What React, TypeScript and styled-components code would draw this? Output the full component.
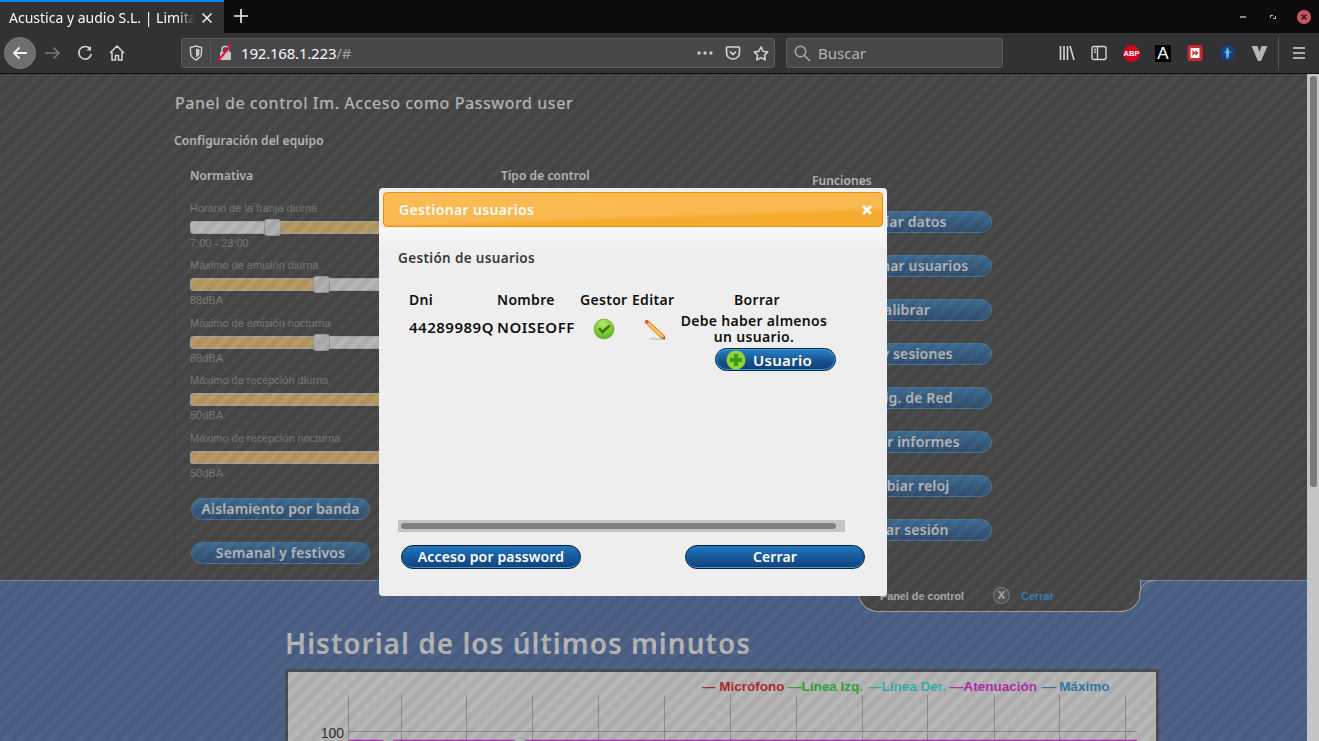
import React from "react";
import styled, { createGlobalStyle } from "styled-components";

const Global = createGlobalStyle`
  html, body { margin: 0; padding: 0; height: 100%; overflow: hidden; background: #323234; }
  * { box-sizing: border-box; }
  #root { height: 741px; }
`;
const ui = `"Noto Sans", "Open Sans", sans-serif`;
const arial = `"Liberation Sans", Arial, sans-serif`;

const Window = styled.div`width:1319px;height:741px;display:flex;flex-direction:column;overflow:hidden;font-family:${ui};`;
const TabStrip = styled.div`height:33px;background:#0c0c0d;display:flex;align-items:stretch;color:#f9f9fa;flex:none;`;
const Tab = styled.div`width:224px;background:#323234;border-top:2px solid #0a84ff;display:flex;align-items:center;padding:0 10px 0 9px;font-size:14px;`;
const TabTitle = styled.span`width:186px;white-space:nowrap;-webkit-mask-image:linear-gradient(90deg,#000 168px,transparent 186px);mask-image:linear-gradient(90deg,#000 168px,transparent 186px);`;
const TabClose = styled.svg`width:12px;height:12px;margin-left:6px;flex:none;`;
const NewTab = styled.svg`width:16px;height:16px;margin:8px 0 0 9px;`;
const WinControls = styled.div`margin-left:auto;display:flex;align-items:center;gap:18px;padding:0 8px 0 0;`;
const WinBtn = styled.svg`width:12px;height:12px;`;
const WinClose = styled.svg`width:14px;height:16px;`;
const NavBar = styled.div`height:41px;background:#323234;border-bottom:1px solid #0c0c0d;display:flex;align-items:center;flex:none;padding-left:4px;`;
const BackCircle = styled.div`width:32px;height:32px;border-radius:50%;background:#6e6e70;display:flex;align-items:center;justify-content:center;border:1px solid #7c7c7e;`;
const NavIcon = styled.div<{ $w: number }>`width:${p => p.$w}px;height:30px;display:flex;align-items:center;justify-content:center;flex:none;`;
const UrlBar = styled.div`width:594px;height:30px;margin-left:48px;background:#474749;border:1px solid #5b5b5e;border-radius:3px;display:flex;align-items:center;color:#f9f9fa;font-size:15px;`;
const UrlDivider = styled.span`width:1px;height:22px;background:#5b5b5e;margin:0 6px 0 0;`;
const UrlHost = styled.span`margin-left:8px;letter-spacing:-.2px;`;
const UrlPath = styled.span`color:#a2a2a4;flex:1;`;
const SearchBar = styled.div`width:217px;height:30px;margin-left:11px;background:#474749;border:1px solid #5b5b5e;border-radius:3px;display:flex;align-items:center;padding-left:7px;gap:7px;color:#b4b4b6;font-size:15px;`;
const Tools = styled.div`display:flex;align-items:center;margin-left:48px;`;
const ToolSep = styled.span`width:1px;height:32px;background:#58585a;margin:0 4px 0 3px;`;
const LetterBadge = styled.span`width:16px;height:17px;background:#000;color:#fff;font:17px/17px ${arial};text-align:center;`;

const Body = styled.div`flex:1;display:flex;min-height:0;`;
const Page = styled.div`width:1307px;position:relative;overflow:hidden;display:flex;flex-direction:column;`;
const ScrollTrack = styled.div`width:12px;background:#c4c4c4;padding:2px 2px 0 3px;`;
const ScrollThumb = styled.div`height:411px;background:#7a7a7a;border-radius:3px;`;
const Overlay = styled.div`position:absolute;inset:0;background-color:rgba(0,0,0,.285);background-image:repeating-linear-gradient(135deg,rgba(0,0,0,.05) 0 4.9px,rgba(255,255,255,.012) 5.7px 9.8px,rgba(0,0,0,.05) 10.6px);pointer-events:none;`;

const Top = styled.section`height:506px;background:#666;padding:19px 0 0 174px;flex:none;`;
const Heading = styled.h1`margin:0;font:500 16px/20px ${ui};color:#fff;letter-spacing:.55px;padding-left:1px;white-space:nowrap;`;
const SubHeading = styled.h2`margin:20px 0 0;font:600 12px/16px ${ui};color:#fff;letter-spacing:.12px;`;
const Columns = styled.div`display:flex;margin-top:11px;`;
const Col = styled.div<{ $w: number }>`width:${p => p.$w}px;height:410px;border-left:1px solid #5d5d5d;padding:8px 0 0 15px;flex:none;`;
const ColTitle = styled.h3<{ $mt?: number }>`margin:${p => p.$mt ?? 0}px 0 0;font:600 12px/16px ${ui};color:#fff;letter-spacing:.07px;`;
const SliderBlock = styled.div`width:280px;height:57.5px;font:11px/13px ${arial};color:#a8a8a8;`;
const SliderList = styled.div`margin-top:17.75px;`;
const Track = styled.div`height:13px;margin:6px 0 3px;background:#fff;border:1px solid #e6e6e6;border-radius:3px;position:relative;`;
const Fill = styled.div`position:absolute;top:0;bottom:0;background:#ffd78b;border-radius:2px;`;
const Handle = styled.div`position:absolute;top:-3px;width:17px;height:17px;background:#f6f6f6;border:1px solid #d0d0d0;border-radius:3px;`;
const Pill = styled.div`width:179px;height:22px;margin:0 0 22px 1px;border-radius:11px;border:1px solid #6ba2cc;background:linear-gradient(#5a98cc,#4d80b2 55%,#4a709f);color:#fff;font:600 14px/20px ${ui};letter-spacing:.15px;text-align:center;white-space:nowrap;overflow:hidden;`;
const PillGroup = styled.div`margin-top:8.25px;`;
const FnList = styled.div`margin-top:22px;`;

const Bottom = styled.section`flex:1;background:#6c89bf;border-top:1px solid #bbb;position:relative;padding-left:285px;`;
const PanelTab = styled.div`position:absolute;left:858px;top:-1px;width:283px;height:32px;background:#666;border:1px solid #e0e0e0;border-top:0;border-radius:0 0 20px 20px;display:flex;align-items:center;padding:0 0 0 21px;font:700 10.8px ${arial};color:#eee;
  &::after{content:"";position:absolute;right:-15px;top:0;width:15px;height:15px;border-top-left-radius:15px;border-top:1px solid #e0e0e0;border-left:1px solid #e0e0e0;background:#6c89bf;}
`;
const TabSep = styled.span`width:1px;height:14px;background:#777;margin:0 15px 0 13px;`;
const XCircle = styled.span`width:17px;height:17px;border-radius:50%;background:#777;border:1px solid #bbb;color:#eee;font-size:11px;line-height:15px;text-align:center;`;
const CloseLink = styled.span`color:#48b2ea;margin-left:11px;font-size:11px;`;
const BigTitle = styled.h2`margin:0;padding:42px 0 0;font:600 28px/40px ${ui};color:#fff;letter-spacing:1px;white-space:nowrap;`;
const ChartBox = styled.div`width:874px;height:80px;margin-top:6px;background:#fff;border:3px solid #6d6d6d;border-bottom:0;`;
const ChartSvg = styled.svg`display:block;`;

const Dialog = styled.div`position:absolute;left:379px;top:114px;width:508px;height:408px;background:#eee;border-radius:4px;padding:4px;display:flex;flex-direction:column;`;
const DialogBar = styled.div`height:35px;border:1px solid #e78f08;border-radius:4px;background:linear-gradient(178deg,#fbbb54 0%,#f9b84f 62%,#f6a92c 72%,#f6ab2f 100%);display:flex;align-items:center;justify-content:space-between;padding:0 10px 0 15px;color:#fff;font:600 14px/20px ${ui};letter-spacing:.35px;flex:none;`;
const DialogBody = styled.div`flex:1;background:linear-gradient(#f8f8f8,#eee 26px);margin:0 -4px;padding:21px 19px 0;display:flex;flex-direction:column;position:relative;`;
const DialogSub = styled.h3`margin:0;font:600 13.5px/20px ${ui};color:#3a3a3a;letter-spacing:.35px;`;
const Table = styled.table`border-collapse:collapse;table-layout:fixed;width:431px;margin:22px 0 0 11px;color:#111;font:600 14px/16px ${ui};letter-spacing:.3px;`;
const Th = styled.th<{ $w: number }>`width:${p => p.$w}px;padding:0;font-weight:600;text-align:left;height:20px;white-space:nowrap;`;
const ThCenter = styled(Th)`text-align:center;padding-right:10px;`;
const Td = styled.td`padding:9px 0 0;vertical-align:top;white-space:nowrap;font-size:15px;letter-spacing:.5px;`;
const TdIcon = styled.td<{ $ml: number }>`padding:8px 0 0 ${p => p.$ml}px;vertical-align:top;`;
const TdWide = styled.td`padding:3px 0 0;vertical-align:top;text-align:center;`;
const Warn = styled.div`line-height:16px;width:150px;margin-left:-5px;`;
const AddBtn = styled.div`width:121px;height:23px;margin:3px 0 0 31px;border-radius:12px;background:linear-gradient(#2b84c9,#164f8d 60%,#123f76);border:1px solid #0f2c55;box-shadow:inset 0 0 0 1px #3c9ad8;display:flex;align-items:center;padding-left:10px;color:#fff;font:600 15px/20px ${ui};letter-spacing:.3px;gap:7px;`;
const HScroll = styled.div`position:absolute;left:19px;top:293px;width:447px;height:12px;background:#c4c4c4;padding:3px 9px 3px 3px;`;
const HThumb = styled.div`height:6px;background:#7f7f7f;border-radius:3px;`;
const DialogFoot = styled.div`position:absolute;left:22px;right:22px;top:318px;display:flex;justify-content:space-between;`;
const DialogBtn = styled.div`width:180px;height:24px;border-radius:12px;background:linear-gradient(#2277bd,#175a9d 50%,#123f76);border:1px solid #0b1e3c;box-shadow:inset 0 -1px 0 #3c9ad8;color:#fff;font:600 14px/22px ${ui};letter-spacing:.15px;text-align:center;`;

const stroke = "#d6d6d8";
const I = {
  Back: () => <svg width="18" height="18" viewBox="0 0 18 18" fill="none" stroke="#f0f0f0" strokeWidth="1.8"><path d="M16 9H3M8.500 3.500 3 9l5.500 5.500" /></svg>,
  Fwd: () => <svg width="18" height="18" viewBox="0 0 18 18" fill="none" stroke="#7b7b7d" strokeWidth="1.6"><path d="M1 9h14M9.500 3.500 15 9l-5.500 5.500" /></svg>,
  Reload: () => <svg width="16" height="16" viewBox="0 0 16 16" fill="none" stroke={stroke} strokeWidth="1.6"><path d="M13.500 4.500A6.300 6.300 0 1 0 14.300 9" /><path d="M14 1v4.500H9.500" fill={stroke} stroke="none" /></svg>,
  Home: () => <svg width="18" height="18" viewBox="0 0 18 18" fill="none" stroke={stroke} strokeWidth="1.5"><path d="M2 9 9 2l7 7M4 8v8h3.500v-4.500h3V16H14V8" /></svg>,
  Shield: () => <svg width="14" height="16" viewBox="0 0 14 16" fill="none" stroke="#c8c8ca" strokeWidth="1.5"><path d="M1.500 2.500 7 1l5.500 1.500V8c0 3-2.500 5.500-5.500 7-3-1.500-5.500-4-5.500-7z" /><path d="M7 3.500 10.500 4.500V8c0 2-1.500 3.500-3.500 4.500z" fill="#c8c8ca" stroke="none" /></svg>,
  Lock: () => <svg width="16" height="18" viewBox="0 0 16 18"><path d="M5 8V5.500a3.200 3.200 0 0 1 6.400 0V8" fill="none" stroke="#c8c8ca" strokeWidth="1.5" /><rect x="3" y="8" width="11" height="8" rx="1" fill="#c8c8ca" /><path d="M1 17 14 1" stroke="#ff0039" strokeWidth="2" /></svg>,
  Dots: () => <svg width="16" height="4" viewBox="0 0 16 4" fill="#c8c8ca"><circle cx="2" cy="2" r="1.700" /><circle cx="8" cy="2" r="1.700" /><circle cx="14" cy="2" r="1.700" /></svg>,
  Pocket: () => <svg width="16" height="16" viewBox="0 0 16 16" fill="none" stroke="#d6d6d8" strokeWidth="1.6"><path d="M2.300 2h11.400c.5 0 .8.300.8.800V8c0 3.400-3 6-6.500 6S1.500 11.400 1.500 8V2.800c0-.5.300-.8.800-.8z" /><path d="m5 6.500 3 3 3-3" /></svg>,
  Star: () => <svg width="17" height="17" viewBox="0 0 17 17" fill="none" stroke="#d6d6d8" strokeWidth="1.6" strokeLinejoin="round"><path d="m8.500 1.500 2.200 4.600 5 .7-3.600 3.500.9 5-4.500-2.400-4.500 2.400.9-5L1.300 6.800l5-.7z" /></svg>,
  Search: () => <svg width="17" height="17" viewBox="0 0 17 17" fill="none" stroke="#a8a8aa" strokeWidth="1.5"><circle cx="6.500" cy="6.500" r="5.200" /><path d="m10.500 10.500 5.500 5.500" /></svg>,
  Library: () => <svg width="16" height="16" viewBox="0 0 16 16" fill="none" stroke="#d6d6d8" strokeWidth="1.6"><path d="M1.500 1v14M5 1v14M8.500 1v14M11 1l4 14" /></svg>,
  Sidebar: () => <svg width="16" height="16" viewBox="0 0 16 16" fill="none" stroke="#d6d6d8" strokeWidth="1.4"><rect x="1" y="1.500" width="14" height="13" rx="2" /><path d="M6.500 1.500v13" /><path d="M3 4.500h2M3 7h2" /></svg>,
  Abp: () => <svg width="17" height="17" viewBox="0 0 17 17"><circle cx="8.500" cy="8.500" r="8.500" fill="#d0021b" /><text x="8.500" y="11.300" textAnchor="middle" fontFamily={arial} fontWeight="700" fontSize="7.500" fill="#fff">ABP</text></svg>,
  Red: () => <svg width="16" height="16" viewBox="0 0 15 16"><rect width="15" height="16" rx="2" fill="#c92a2a" /><rect x="3" y="3" width="9" height="10" rx="1" fill="#fff" /><path d="M5 5l3 3-3 3zM8 5l3 3-3 3z" fill="#c92a2a" /></svg>,
  Blue: () => <svg width="15" height="16" viewBox="0 0 16 18"><ellipse cx="8" cy="9" rx="8" ry="9" fill="#17407e" /><path d="M8 2 10 7l3 2-3-.5L9 15H7L6 8.500 3 9l3-2z" fill="#6bb4dc" /></svg>,
  V: () => <svg width="17" height="15" viewBox="0 0 16 15"><path d="M0 0h6l2 6 2-6h6L9.500 15h-3z" fill="#b4b4b6" /></svg>,
  Menu: () => <svg width="14" height="14" viewBox="0 0 14 14" stroke="#d6d6d8" strokeWidth="1.6"><path d="M1 2h12M1 7h12M1 12h12" /></svg>,
  Check: () => <svg width="22" height="22" viewBox="0 0 22 22"><defs><radialGradient id="gc" cx=".45" cy=".25" r=".85"><stop offset="0" stopColor="#b4e86a" /><stop offset=".6" stopColor="#7cc92e" /><stop offset="1" stopColor="#4da61a" /></radialGradient></defs><circle cx="11" cy="11" r="10" fill="url(#gc)" stroke="#5c9c2a" strokeWidth=".6" /><path d="m5 11 2-1.500 2.500 2.500L16 6.500l1.500 2L9.500 16z" fill="#3b7a14" /></svg>,
  Pencil: () => <svg width="22" height="22" viewBox="0 0 22 22"><path d="M6 20.500 20 21.500" stroke="#c4c4c4" strokeWidth="1.500" /><path d="M5 3.500 20 17l1 4-4-1L2.500 6z" fill="#f6b33c" stroke="#b97a18" strokeWidth=".7" /><path d="M4.500 5.500l13 12.500" stroke="#fbdc8a" strokeWidth="1" /><path d="M2.500 6 5 3.500 3.600 2.200a1.300 1.300 0 0 0-1.900 0l-.6.6a1.300 1.300 0 0 0 0 1.900z" fill="#e2445c" /><path d="M18.500 20.400 21 21l-.6-2.500z" fill="#444" /></svg>,
  Plus: () => <svg width="20" height="20" viewBox="0 0 20 20"><circle cx="10" cy="10" r="9.500" fill="#8fd336" /><path d="M8 4h4v4h4v4h-4v4H8v-4H4V8h4z" fill="#3f9a1c" /></svg>,
};

const sliders = [
  { label: "Horario de la franja diurna", value: "7:00 - 23:00", from: 90, to: 280, handle: 73 },
  { label: "Máximo de emisión diurna", value: "88dBA", from: 0, to: 124, handle: 122 },
  { label: "Máximo de emisión nocturna", value: "88dBA", from: 0, to: 124, handle: 122 },
  { label: "Máximo de recepción diurna", value: "50dBA", from: 0, to: 280 },
  { label: "Máximo de recepción nocturna", value: "50dBA", from: 0, to: 280 },
];
const functions = ["Copiar datos", "Gestionar usuarios", "Calibrar", "Log y sesiones", "Config. de Red", "Grabar informes", "Cambiar reloj", "Cerrar sesión"];
const verticals = [348, 401, 466, 532, 598, 664, 730, 796, 862, 927, 994, 1059, 1125];
const legend = [
  { t: "— Micrófono", c: "#f63a43", x: 417 },
  { t: "—Línea Izq.", c: "#42e851", x: 503 },
  { t: "—Línea Der.", c: "#4af6f0", x: 583 },
  { t: "—Atenuación", c: "#f63df3", x: 665 },
  { t: "— Máximo", c: "#42a8eb", x: 757 },
];

const Chart = () => (
  <ChartSvg width="868" height="80" viewBox="0 0 868 80">
    {verticals.map(x => <line key={x} x1={x - 287.5} x2={x - 287.5} y1="23" y2="70" stroke="#c4c4c4" />)}
    <line x1="60" x2="849" y1="59.500" y2="59.500" stroke="#c4c4c4" />
    <path d="M60 68.500H95M105 68.500H227M237 68.500H849" stroke="#ec4ce4" strokeWidth="1.500" />
    <text x="56" y="66" textAnchor="end" fontFamily={arial} fontSize="14" fill="#444">100</text>
    {legend.map(l => <text key={l.t} x={l.x - 3} y="19" fontFamily={arial} fontWeight="700" fontSize="13.500" fill={l.c}>{l.t}</text>)}
  </ChartSvg>
);

export default function App() {
  return (
    <Window>
      <Global />
      <TabStrip>
        <Tab>
          <TabTitle>Acustica y audio S.L. | Limita</TabTitle>
          <TabClose viewBox="0 0 12 12" stroke="#f0f0f0" strokeWidth="1.500"><path d="M1.500 1.500l9 9M10.500 1.500l-9 9" /></TabClose>
        </Tab>
        <NewTab viewBox="0 0 16 16" stroke="#f0f0f0" strokeWidth="1.600"><path d="M8 1v14M1 8h14" /></NewTab>
        <WinControls>
          <WinBtn viewBox="0 0 12 12"><path d="M3 6h6" stroke="#b4b4b4" strokeWidth="1.500" /></WinBtn>
          <WinBtn viewBox="0 0 12 12"><path d="M3 4h3v1H4v2H3zM9 8H6V7h2V5h1z" fill="#b4b4b4" /></WinBtn>
          <WinClose viewBox="0 0 12 12"><ellipse cx="6" cy="6" rx="6" ry="6" fill="#c9535f" /><path d="M4 4l4 4M8 4l-4 4" stroke="#222" strokeWidth="1.400" /></WinClose>
        </WinControls>
      </TabStrip>
      <NavBar>
        <BackCircle><I.Back /></BackCircle>
        <NavIcon $w={33}><I.Fwd /></NavIcon>
        <NavIcon $w={32}><I.Reload /></NavIcon>
        <NavIcon $w={32}><I.Home /></NavIcon>
        <UrlBar>
          <NavIcon $w={28}><I.Shield /></NavIcon>
          <UrlDivider />
          <I.Lock />
          <UrlHost>192.168.1.223</UrlHost><UrlPath>/#</UrlPath>
          <NavIcon $w={16}><I.Dots /></NavIcon>
          <NavIcon $w={40}><I.Pocket /></NavIcon>
          <NavIcon $w={16}><I.Star /></NavIcon>
          <NavIcon $w={5} />
        </UrlBar>
        <SearchBar><I.Search />Buscar</SearchBar>
        <Tools>
          <NavIcon $w={32}><I.Library /></NavIcon>
          <NavIcon $w={32}><I.Sidebar /></NavIcon>
          <NavIcon $w={32}><I.Abp /></NavIcon>
          <NavIcon $w={32}><LetterBadge>A</LetterBadge></NavIcon>
          <NavIcon $w={32}><I.Red /></NavIcon>
          <NavIcon $w={32}><I.Blue /></NavIcon>
          <NavIcon $w={32}><I.V /></NavIcon>
          <ToolSep />
          <NavIcon $w={32}><I.Menu /></NavIcon>
        </Tools>
      </NavBar>
      <Body>
        <Page>
          <Top>
            <Heading>Panel de control Im. Acceso como Password user</Heading>
            <SubHeading>Configuración del equipo</SubHeading>
            <Columns>
              <Col $w={311}>
                <ColTitle>Normativa</ColTitle>
                <SliderList>
                  {sliders.map(s => (
                    <SliderBlock key={s.label}>
                      {s.label}
                      <Track>
                        <Fill style={{ left: s.from, width: s.to - s.from }} />
                        {s.handle !== undefined && <Handle style={{ left: s.handle }} />}
                      </Track>
                      {s.value}
                    </SliderBlock>
                  ))}
                </SliderList>
                <PillGroup>
                  <Pill>Aislamiento por banda</Pill>
                  <Pill>Semanal y festivos</Pill>
                </PillGroup>
              </Col>
              <Col $w={311}><ColTitle>Tipo de control</ColTitle></Col>
              <Col $w={300}>
                <ColTitle $mt={5}>Funciones</ColTitle>
                <FnList>{functions.map(f => <Pill key={f}>{f}</Pill>)}</FnList>
              </Col>
            </Columns>
          </Top>
          <Bottom>
            <PanelTab>Panel de control<TabSep /><XCircle>X</XCircle><CloseLink>Cerrar</CloseLink></PanelTab>
            <BigTitle>Historial de los últimos minutos</BigTitle>
            <ChartBox><Chart /></ChartBox>
          </Bottom>
          <Overlay />
          <Dialog>
            <DialogBar>
              Gestionar usuarios
              <svg width="10" height="10" viewBox="0 0 10 10" stroke="#fff" strokeWidth="2.800"><path d="M1 1l8 8M9 1 1 9" /></svg>
            </DialogBar>
            <DialogBody>
              <DialogSub>Gestión de usuarios</DialogSub>
              <Table>
                <thead>
                  <tr>
                    <Th $w={88}>Dni</Th><Th $w={83}>Nombre</Th><Th $w={52}>Gestor</Th><Th $w={52}>Editar</Th><ThCenter $w={156}>Borrar</ThCenter>
                  </tr>
                </thead>
                <tbody>
                  <tr>
                    <Td>44289989Q</Td>
                    <Td>NOISEOFF</Td>
                    <TdIcon $ml={13}><I.Check /></TdIcon>
                    <TdIcon $ml={12}><I.Pencil /></TdIcon>
                    <TdWide>
                      <Warn>Debe haber almenos un usuario.</Warn>
                      <AddBtn><I.Plus />Usuario</AddBtn>
                    </TdWide>
                  </tr>
                </tbody>
              </Table>
              <HScroll><HThumb /></HScroll>
              <DialogFoot>
                <DialogBtn>Acceso por password</DialogBtn>
                <DialogBtn>Cerrar</DialogBtn>
              </DialogFoot>
            </DialogBody>
          </Dialog>
        </Page>
        <ScrollTrack><ScrollThumb /></ScrollTrack>
      </Body>
    </Window>
  );
}
